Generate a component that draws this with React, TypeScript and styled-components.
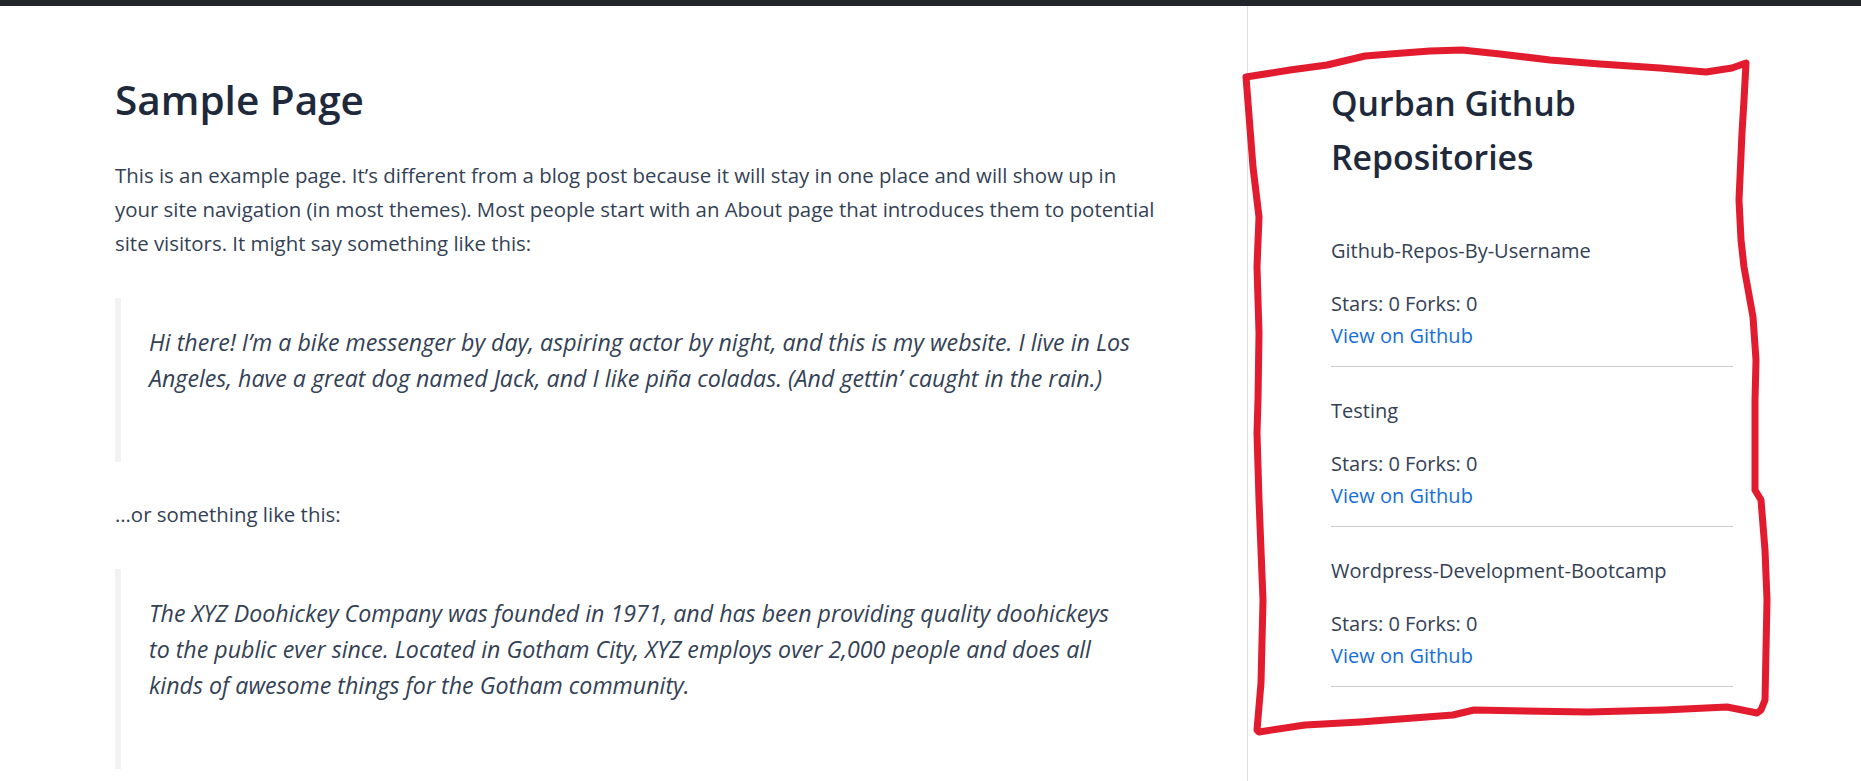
import React from 'react';
import styled, { createGlobalStyle } from 'styled-components';

const GlobalStyle = createGlobalStyle`
  * {
    box-sizing: border-box;
  }

  html, body {
    margin: 0;
    padding: 0;
    background: #ffffff;
  }

  body {
    font-family: "Open Sans", "Noto Sans", "Liberation Sans", sans-serif;
    color: #334155;
    -webkit-font-smoothing: antialiased;
  }
`;

const Page = styled.div`
  position: relative;
  overflow: hidden;
`;

const TopBar = styled.div`
  height: 6px;
  background: #212529;
`;

const Row = styled.div`
  display: flex;
  height: calc(100vh - 6px);
  padding-left: 115px;
`;

const Main = styled.main`
  width: 1075px;
  margin-right: 57px;
  padding-top: 69px;
`;

const Title = styled.h1`
  margin: 0 0 33px;
  font-size: 40.5px;
  line-height: 50px;
  font-weight: 600;
  color: #1e293b;
`;

const Paragraph = styled.p`
  margin: 0 0 38px;
  font-size: 20.4px;
  line-height: 34px;
  white-space: nowrap;
`;

const Quote = styled.blockquote`
  margin: 0 0 35px;
  padding: 26px 0 66px 28px;
  border-left: 6px solid #f2f2f2;
  font-size: 23.2px;
  line-height: 36px;
  font-style: italic;

  p {
    margin: 0;
    white-space: nowrap;
  }

  &:last-child {
    margin-bottom: 0;
  }
`;

const Sidebar = styled.aside`
  width: 485px;
  border-left: 1px solid #dedede;
  padding: 70px 0 0 83px;
`;

const SidebarTitle = styled.h2`
  margin: 0 0 23px;
  font-size: 33.8px;
  line-height: 54px;
  font-weight: 600;
  color: #1e293b;
`;

const RepoList = styled.ul`
  list-style: none;
  margin: 0;
  padding: 0;
  width: 402px;
`;

const Repo = styled.li`
  padding: 28px 0 14px;
  border-bottom: 1px solid #cbcbcb;
`;

const RepoName = styled.p`
  margin: 0 0 21px;
  font-size: 20px;
  line-height: 32px;
`;

const RepoStats = styled.p`
  margin: 0;
  font-size: 20px;
  line-height: 32px;

  a {
    color: #1570d8;
    text-decoration: none;
  }
`;

const Annotation = styled.svg`
  position: absolute;
  top: 0;
  left: 0;
  width: 1861px;
  height: 781px;
  pointer-events: none;
`;

const repos = [
  { name: 'Github-Repos-By-Username', stars: 0, forks: 0 },
  { name: 'Testing', stars: 0, forks: 0 },
  { name: 'Wordpress-Development-Bootcamp', stars: 0, forks: 0 },
];

// hand-drawn highlight round the widget
const marker =
  'M1246,77 L1290,70 L1327,65 L1365,56 L1403,53 L1430,51 L1462,50 L1500,54 L1550,60 L1600,64 ' +
  'L1660,68 L1706,72 L1732,68 L1746,63 L1744,100 L1742,133 L1739,200 L1741,240 L1744,267 ' +
  'L1753,317 L1756,360 L1755,400 L1755,490 L1761,500 L1765,550 L1767,600 L1766,650 L1765,700 ' +
  'L1761,710 L1757,713 L1727,707 L1664,710 L1588,712 L1474,710 L1453,715 L1360,722 L1305,725 ' +
  'L1259,732 L1257,730 L1261,683 L1263,600 L1259,500 L1257,433 L1258,400 L1259,333 L1257,267 ' +
  'L1259,217 L1253,167 Z';

export default function App() {
  return (
    <Page>
      <GlobalStyle />
      <TopBar />
      <Row>
        <Main>
          <Title>Sample Page</Title>
          <Paragraph>
            This is an example page. It’s different from a blog post because it will stay in one place and will show up in
            <br />
            your site navigation (in most themes). Most people start with an About page that introduces them to potential
            <br />
            site visitors. It might say something like this:
          </Paragraph>
          <Quote>
            <p>
              Hi there! I’m a bike messenger by day, aspiring actor by night, and this is my website. I live in Los
              <br />
              Angeles, have a great dog named Jack, and I like piña coladas. (And gettin’ caught in the rain.)
            </p>
          </Quote>
          <Paragraph>…or something like this:</Paragraph>
          <Quote>
            <p>
              The XYZ Doohickey Company was founded in 1971, and has been providing quality doohickeys
              <br />
              to the public ever since. Located in Gotham City, XYZ employs over 2,000 people and does all
              <br />
              kinds of awesome things for the Gotham community.
            </p>
          </Quote>
        </Main>
        <Sidebar>
          <SidebarTitle>
            Qurban Github
            <br />
            Repositories
          </SidebarTitle>
          <RepoList>
            {repos.map((repo) => (
              <Repo key={repo.name}>
                <RepoName>{repo.name}</RepoName>
                <RepoStats>
                  Stars: {repo.stars} Forks: {repo.forks}
                  <br />
                  <a href="#">View on Github</a>
                </RepoStats>
              </Repo>
            ))}
          </RepoList>
        </Sidebar>
      </Row>
      <Annotation viewBox="0 0 1861 781">
        <path
          d={marker}
          fill="none"
          stroke="#e31b2e"
          strokeWidth={7}
          strokeLinejoin="round"
          strokeLinecap="round"
        />
      </Annotation>
    </Page>
  );
}
